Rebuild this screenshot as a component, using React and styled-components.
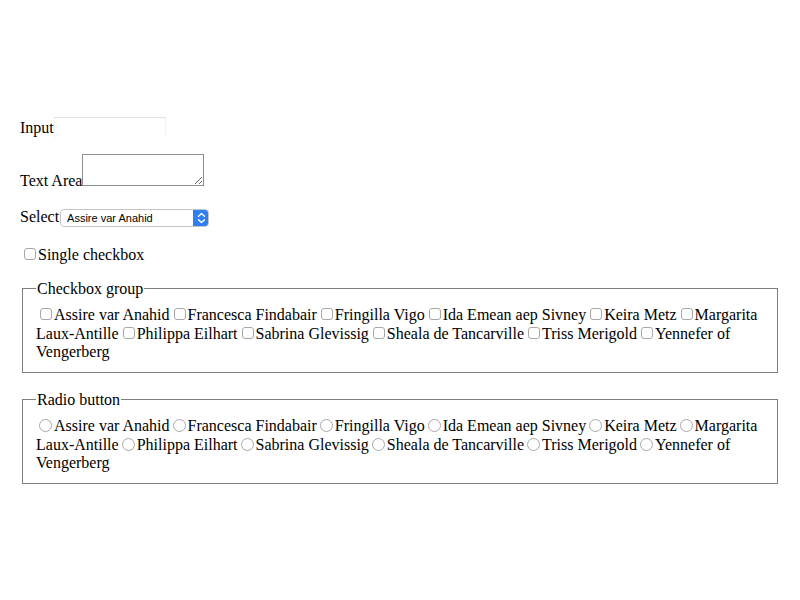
import React, { useState } from "react"
import styled, { createGlobalStyle } from "styled-components"

const names = [
  "Assire var Anahid",
  "Francesca Findabair",
  "Fringilla Vigo",
  "Ida Emean aep Sivney",
  "Keira Metz",
  "Margarita Laux-Antille",
  "Philippa Eilhart",
  "Sabrina Glevissig",
  "Sheala de Tancarville",
  "Triss Merigold",
  "Yennefer of Vengerberg",
]

const GlobalStyle = createGlobalStyle`
  html, body {
    margin: 0;
    padding: 0;
    background: #ffffff;
  }
  body {
    font-family: "Liberation Serif", "Times New Roman", serif;
    font-size: 16px;
    color: #000000;
  }
`

function App() {
  const [radio, setRadio] = useState(null)

  return (
    <Page>
      <GlobalStyle />
      <Form onSubmit={(e) => e.preventDefault()}>
        <Row>
          <label>
            Input
            <TextInput type="text" />
          </label>
        </Row>
        <Row $space={18}>
          <label>
            Text Area
            <TextArea />
          </label>
        </Row>
        <Row $space={18}>
          <label>
            Select
            <SelectWrap>
              <Select defaultValue={names[0]}>
                {names.map((n) => (
                  <option key={n}>{n}</option>
                ))}
              </Select>
              <Arrows viewBox="0 0 15 18">
                <path d="M4.5 7.2 L7.5 4.4 L10.5 7.2" />
                <path d="M4.5 10.8 L7.5 13.6 L10.5 10.8" />
              </Arrows>
            </SelectWrap>
          </label>
        </Row>
        <Row $space={16}>
          <label>
            <Checkbox type="checkbox" />
            Single checkbox
          </label>
        </Row>
        <Group>
          <Legend>Checkbox group</Legend>
          {names.map((n) => (
            <label key={n}>
              <Checkbox type="checkbox" name="group" value={n} />
              {n}
            </label>
          ))}
        </Group>
        <Group>
          <Legend>Radio button</Legend>
          {names.map((n) => (
            <label key={n}>
              <Radio
                type="radio"
                name="radio"
                value={n}
                checked={radio === n}
                onChange={() => setRadio(n)}
              />
              {n}
            </label>
          ))}
        </Group>
      </Form>
    </Page>
  )
}

const Page = styled.div`
  min-height: 100vh;
  box-sizing: border-box;
  padding: 0 20px;
  display: flex;
  align-items: center;
`
const Form = styled.form`
  width: 100%;
`
const Row = styled.div`
  margin-bottom: ${(p) => p.$space || 16}px;
`
const TextInput = styled.input`
  box-sizing: border-box;
  width: 112px;
  height: 21px;
  margin: 0;
  padding: 1px 2px;
  border: 1px solid #f3f3f3;
  border-top-color: #e2e2e2;
  border-bottom: none;
  font-size: 13px;
  vertical-align: 1px;
  outline: none;
`
const TextArea = styled.textarea`
  box-sizing: border-box;
  width: 122px;
  height: 32px;
  margin: 0;
  padding: 2px;
  border: 1px solid #8e8e8e;
  font-family: "Liberation Mono", monospace;
  font-size: 13px;
  vertical-align: baseline;
`
const SelectWrap = styled.span`
  position: relative;
  display: inline-block;
  margin-left: 1px;
  vertical-align: 0;
`
const Select = styled.select`
  appearance: none;
  box-sizing: border-box;
  display: block;
  width: 149px;
  height: 18px;
  margin: 0;
  padding: 0 16px 0 6px;
  border: 1px solid #c4c4c4;
  border-radius: 4px;
  background: linear-gradient(to left, #2f7ff3 15px, #ffffff 15px);
  font-family: "Liberation Sans", Arial, sans-serif;
  font-size: 11px;
  color: #000000;
  outline: none;
`
const Arrows = styled.svg`
  position: absolute;
  right: 0;
  top: 0;
  width: 15px;
  height: 18px;
  pointer-events: none;
  fill: none;
  stroke: #ffffff;
  stroke-width: 1.4;
  stroke-linecap: round;
  stroke-linejoin: round;
`
const Checkbox = styled.input`
  appearance: none;
  box-sizing: border-box;
  width: 12px;
  height: 12px;
  margin: 3px 2px 0 4px;
  border: 1px solid #a8a8a8;
  border-radius: 3px;
  background: #ffffff;
  vertical-align: baseline;

  &:checked {
    background: #2f7ff3;
    border-color: #2f7ff3;
  }
`
const Radio = styled.input`
  appearance: none;
  box-sizing: border-box;
  width: 13px;
  height: 13px;
  margin: 3px 2px 0 3px;
  border: 1px solid #a9a9a9;
  border-radius: 50%;
  background: #ffffff;
  vertical-align: -1px;

  &:checked {
    border: 4px solid #2f7ff3;
  }
`
const Group = styled.fieldset`
  margin: 0 2px 18px;
  padding: 7px 12px 11px 13px;
  border: 1px solid #7f7f7f;
  min-inline-size: auto;

  &:last-child {
    margin-bottom: 0;
  }
`
const Legend = styled.legend`
  padding: 0 1px;
`

export default App
